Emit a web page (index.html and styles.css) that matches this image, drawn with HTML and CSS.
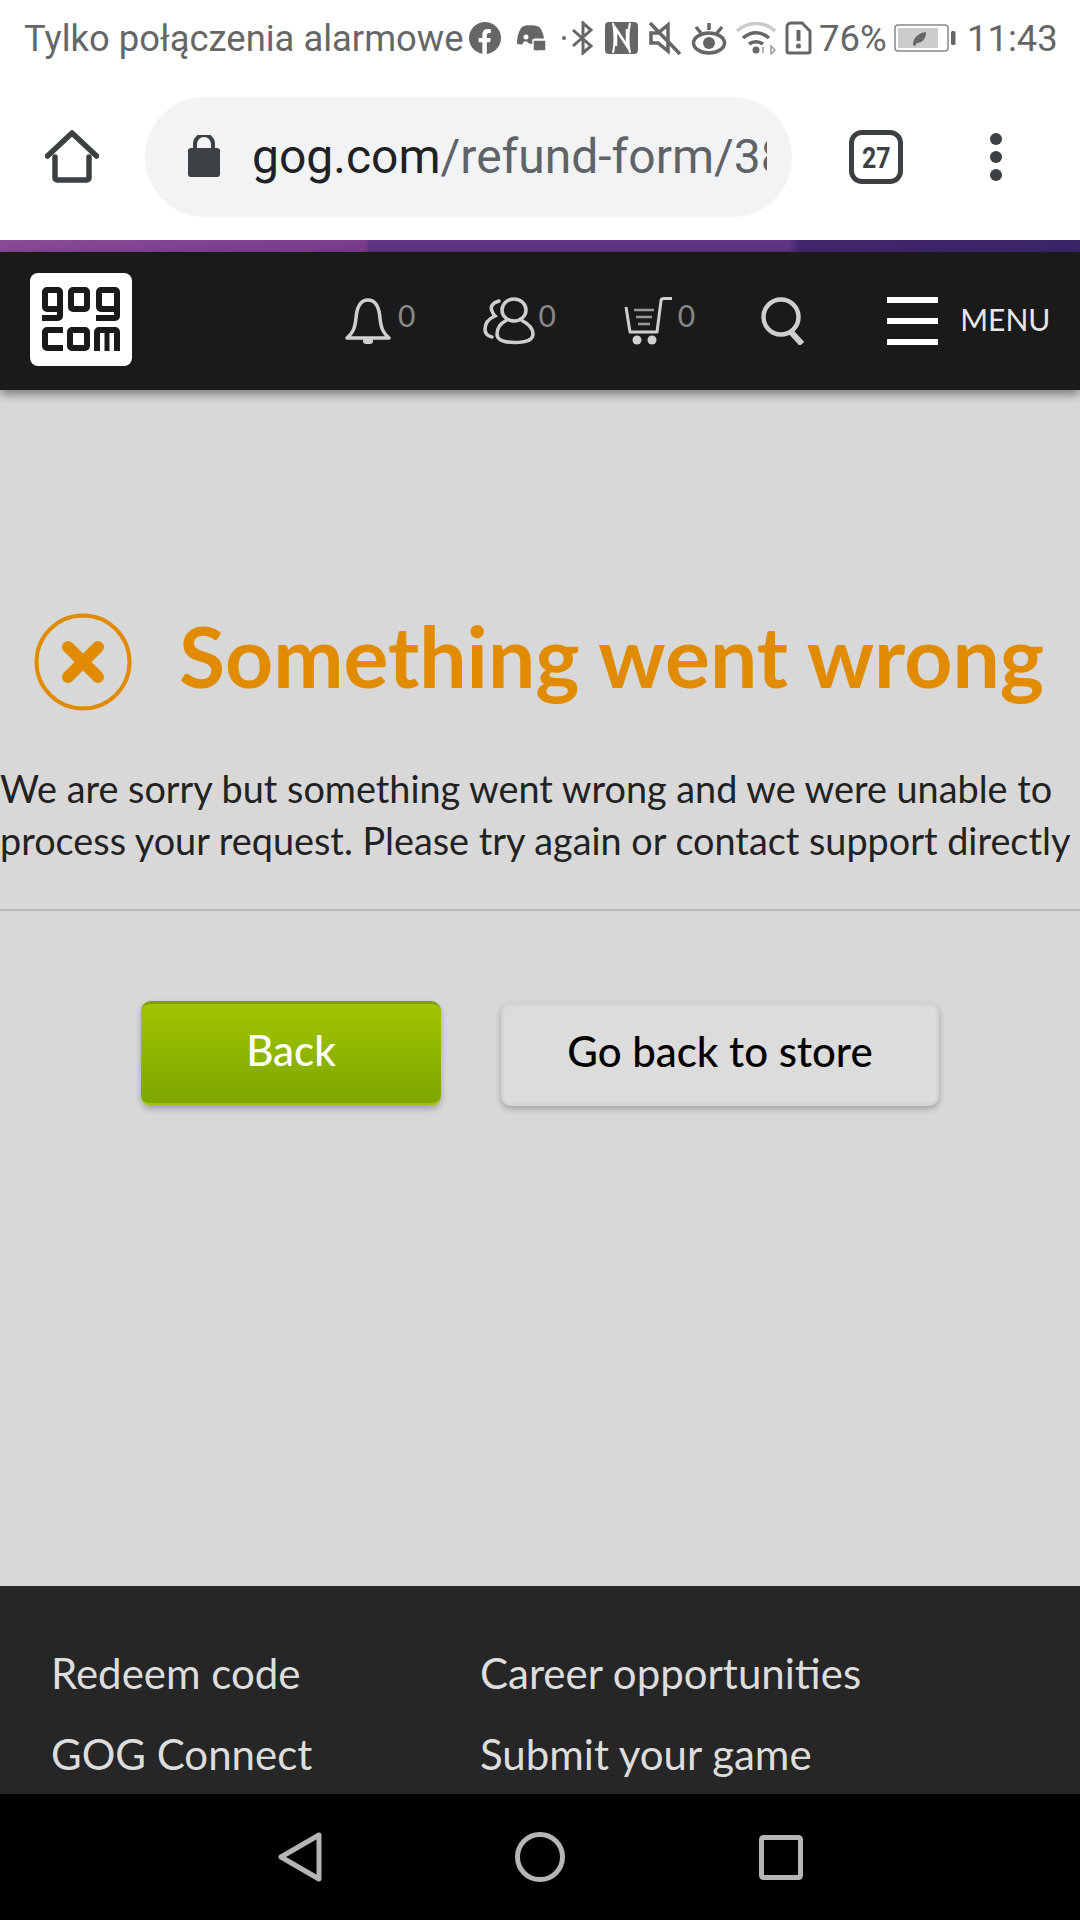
FILE: index.html
```html
<!DOCTYPE html>
<html lang="en">
<head>
<meta charset="utf-8">
<title>GOG.com</title>
<link rel="stylesheet" href="styles.css">
</head>
<body>
<div class="screen">
  <header class="status">
    <span class="status-text">Tylko połączenia alarmowe</span>
    <svg class="si si-fb" width="32" height="32" viewBox="0 0 30 30"><circle cx="15" cy="15" r="15" fill="#666"/><path d="M12.5 30V19H9v-4h3.500v-3c0-3.500 2-5.500 5.200-5.500 1.500 0 2.800.2 2.800.2v3.500h-1.600c-1.700 0-2.200 1-2.200 2.100V15h3.700l-.6 4h-3.100v11z" fill="#fff"/></svg>
    <svg class="si si-dc" width="30" height="30" viewBox="0 0 30 30"><path d="M1 21C1 14 3 7 6 4c3-1.500 6-2 8-1.500 3-.5 7 0 10 2 2 3 3.500 7 4 11H18v6l-5-1-2-2H8l-2 3c-3 0-4-.5-5-.5z" fill="#666"/><circle cx="10" cy="14" r="2.500" fill="#fff"/><path d="M17 17h13v11H22l-2 3v-3h-3z" fill="#666" stroke="#fff" stroke-width="1.500"/></svg>
    <span class="si-dot"></span>
    <svg class="si si-bt" width="24" height="34" viewBox="0 0 24 34"><path d="M2 9l18 16-8 7V2l8 7L2 25" fill="none" stroke="#666" stroke-width="3"/></svg>
    <svg class="si si-nfc" width="33" height="34" viewBox="0 0 33 34"><rect x="0" y="1" width="33" height="32" rx="4" fill="#666"/><path d="M8 2c2 8 2 22 0 30M25 2c-2 8-2 22 0 30" fill="none" stroke="#fff" stroke-width="2"/><path d="M11 25V8l11 17V8" fill="none" stroke="#fff" stroke-width="2.500"/></svg>
    <svg class="si si-mute" width="34" height="34" viewBox="0 0 34 34"><path d="M3 12v10h7l10 8V4l-10 8z" fill="none" stroke="#666" stroke-width="3.500"/><path d="M2 2l30 31" stroke="#666" stroke-width="3.500"/></svg>
    <svg class="si si-eye" width="36" height="34" viewBox="0 0 36 34"><ellipse cx="18" cy="22" rx="15.500" ry="10" fill="none" stroke="#666" stroke-width="3.500"/><circle cx="18" cy="22" r="6" fill="#666"/><path d="M18 2v7M5 6l5 6M31 6l-5 6" stroke="#666" stroke-width="3.500"/></svg>
    <svg class="si si-wifi" width="40" height="34" viewBox="0 0 40 34"><path d="M1 10c11-10 27-10 38 0" fill="none" stroke="#ccc" stroke-width="3.500"/><path d="M7 17c8-7 18-7 26 0M13 23c4-3 10-3 14 0" fill="none" stroke="#666" stroke-width="3.500"/><circle cx="20" cy="29" r="3.500" fill="#666"/><path d="M27 32v-6M35 33v-8l4 4z" fill="none" stroke="#999" stroke-width="1.500"/></svg>
    <svg class="si si-sim" width="27" height="34" viewBox="0 0 27 34"><path d="M2 6a4 4 0 0 1 4-4h11l8 8v20a2 2 0 0 1-2 2H4a2 2 0 0 1-2-2z" fill="none" stroke="#666" stroke-width="3"/><path d="M13.500 9v11" stroke="#666" stroke-width="4"/><circle cx="13.500" cy="25" r="2.500" fill="#666"/></svg>
    <span class="status-pct">76%</span>
    <svg class="si si-batt" width="62" height="30" viewBox="0 0 62 30"><rect x="1" y="2" width="53" height="26" rx="3" fill="none" stroke="#888" stroke-width="1.500"/><rect x="4" y="5" width="40" height="20" fill="#ccc"/><rect x="57" y="8" width="4.500" height="14" rx="1.500" fill="#666"/><path d="M19 22c0-8 6-12 13-13 0 7-4 11-9 11l-2 3z" fill="#666"/></svg>
    <span class="status-time">11:43</span>
  </header>

  <div class="browser">
    <svg class="br-home" width="54" height="54" viewBox="0 0 54 54"><path d="M10 27v21a2 2 0 0 0 2 2h30a2 2 0 0 0 2-2V27M2.500 26L27 3l24.500 23" fill="none" stroke="#3c4043" stroke-width="5.500" stroke-linejoin="round" stroke-linecap="round"/></svg>
    <div class="pill">
      <svg class="lock" width="32" height="42" viewBox="0 0 32 42"><rect x="0" y="13" width="32" height="29" rx="3" fill="#3c4043"/><path d="M7 15V9a9 9 0 0 1 18 0v6" fill="none" stroke="#3c4043" stroke-width="4"/></svg>
      <div class="url"><span class="url-host">gog.com</span><span class="url-path">/refund-form/38</span></div>
    </div>
    <div class="tabs"><span class="tabs-num">27</span></div>
    <div class="dots"><i></i><i></i><i></i></div>
  </div>

  <div class="strip"></div>

  <nav class="gognav">
    <svg class="logo" width="102" height="93" viewBox="0 0 102 93" role="img" aria-label="GOG.com logo">
      <rect width="102" height="93" rx="8" fill="#fff"/>
      <g fill="none" stroke="#1a1a1a" stroke-width="6" stroke-linejoin="round">
        <rect x="15" y="17" width="15" height="19" rx="2"/><path d="M30 19V43a2 2 0 0 1-2 2H12"/>
        <rect x="41" y="17" width="16" height="19" rx="2"/>
        <rect x="69" y="17" width="18" height="19" rx="2"/><path d="M87 19V43a2 2 0 0 1-2 2H66"/>
        <path d="M33 57H17a2 2 0 0 0-2 2V73a2 2 0 0 0 2 2H33"/>
        <rect x="40" y="57" width="17" height="18" rx="2"/>
        <path d="M67 78V59a2 2 0 0 1 2-2H85a2 2 0 0 1 2 2V78"/>
        <path d="M77 57V78" stroke-width="5"/>
      </g>
    </svg>
    <div class="nav-items">
      <div class="nav-item nav-bell">
        <svg width="46" height="48" viewBox="0 0 46 48"><path d="M2 41c6-5 8-10 9-20 1-12 5-18 12-18s11 6 12 18c1 10 3 15 9 20z" fill="none" stroke="#cfcfcf" stroke-width="3.500" stroke-linejoin="round"/><path d="M18 42h10v2a3 3 0 0 1-3 3h-4a3 3 0 0 1-3-3z" fill="#cfcfcf"/></svg>
        <span class="count">0</span>
      </div>
      <div class="nav-item nav-friends">
        <svg width="52" height="48" viewBox="0 0 52 48"><path d="M16 4C9 6 7 10 9 14c1 3 3 5 3 5-7 3-10 8-10 13 0 4 2 7 7 8" fill="none" stroke="#cfcfcf" stroke-width="3.500" stroke-linecap="round"/><ellipse cx="31" cy="13" rx="12" ry="11" fill="none" stroke="#cfcfcf" stroke-width="3.500"/><path d="M24 23C16 27 14 32 14 37c0 6 8 8.500 18 8.500S50 43 50 37c0-5-4-10-12-14" fill="none" stroke="#cfcfcf" stroke-width="3.500"/></svg>
        <span class="count">0</span>
      </div>
      <div class="nav-item nav-cart">
        <svg width="50" height="48" viewBox="0 0 50 48"><path d="M2 10l4 25h27l4-31c0-1.500 1-2.500 3-2.500h8" fill="none" stroke="#cfcfcf" stroke-width="3" stroke-linejoin="round"/><path d="M10 13h20M12 20h16M14 27h12" stroke="#999" stroke-width="2.500"/><circle cx="13" cy="43" r="4.500" fill="#cfcfcf"/><circle cx="28" cy="43" r="4.500" fill="#cfcfcf"/></svg>
        <span class="count">0</span>
      </div>
      <svg class="nav-search" width="46" height="48" viewBox="0 0 46 48"><circle cx="20" cy="20" r="17.500" fill="none" stroke="#cfcfcf" stroke-width="4.500"/><path d="M30 35l11 12" stroke="#cfcfcf" stroke-width="6"/></svg>
      <div class="burger"><i></i><i></i><i></i></div>
      <span class="menu">MENU</span>
    </div>
  </nav>

  <main class="main">
    <div class="headline">
      <svg class="x-icon" width="98" height="98" viewBox="0 0 98 98"><circle cx="49" cy="49" r="46.500" fill="none" stroke="#e08b00" stroke-width="4"/><path d="M34 34l30 30M64 34L34 64" stroke="#e08b00" stroke-width="12" stroke-linecap="round"/></svg>
      <h1 class="title">Something went wrong</h1>
    </div>
    <p class="msg">We are sorry but something went wrong and we were unable to process your request. Please try again or contact support directly</p>
    <hr class="rule">
    <div class="actions">
      <a class="btn btn-green">Back</a>
      <a class="btn btn-grey">Go back to store</a>
    </div>
  </main>

  <footer class="foot">
    <div class="foot-col foot-left"><span>Redeem code</span><span>GOG Connect</span></div>
    <div class="foot-col"><span>Career opportunities</span><span>Submit your game</span></div>
  </footer>

  <div class="sysnav">
    <svg width="46" height="52" viewBox="0 0 46 52"><path d="M42 4L4 26l38 22z" fill="none" stroke="#b5b5b5" stroke-width="5" stroke-linejoin="round"/></svg>
    <svg width="50" height="50" viewBox="0 0 50 50"><circle cx="25" cy="25" r="22.500" fill="none" stroke="#b5b5b5" stroke-width="5"/></svg>
    <svg class="sys-square" width="44" height="45" viewBox="0 0 44 45"><rect x="2.500" y="2.500" width="39" height="40" rx="2" fill="none" stroke="#b5b5b5" stroke-width="5"/></svg>
  </div>
</div>
</body>
</html>
```
FILE: styles.css
```css
* { box-sizing: border-box; }
html, body { margin: 0; padding: 0; }
body { font-family: "Lato", "Noto Sans", sans-serif; background: #d8d8d8; }
.screen { width: 1080px; height: 1920px; overflow: hidden; display: flex; flex-direction: column; }

.status { height: 76px; flex: none; background: #fff; display: flex; align-items: center; padding-left: 24px; font-family: "Roboto", sans-serif; font-size: 36.400px; color: #666; white-space: nowrap; }
.status-text { width: 445px; flex: none; }
.si { flex: none; display: block; }
.si-dc { margin-left: 15px; }
.si-dot { width: 4px; height: 4px; border-radius: 50%; background: #666; margin-left: 16px; }
.si-bt { margin-left: 5px; }
.si-nfc { margin-left: 10px; }
.si-mute { margin-left: 10px; }
.si-eye { margin-left: 9px; }
.si-wifi { margin-left: 9px; }
.si-sim { margin-left: 9px; }
.status-pct { margin-left: 7px; width: 70px; }
.si-batt { margin-left: 5px; }
.status-time { margin-left: 11px; }

.browser { height: 164px; flex: none; background: #fff; display: flex; align-items: center; padding: 0 0 2px 45px; }
.br-home { flex: none; }
.pill { width: 647px; height: 120px; flex: none; margin-left: 46px; border-radius: 60px; background: #f1f3f4; display: flex; align-items: center; padding-left: 43px; }
.lock { flex: none; margin-top: -2px; }
.url { width: 515px; margin-left: 32px; overflow: hidden; white-space: nowrap; font-family: "Roboto", sans-serif; font-size: 48px; line-height: 60px; }
.url-host { color: #202124; }
.url-path { color: #5f6368; }
.tabs { width: 54px; height: 54px; flex: none; margin-left: 57px; border: 5.500px solid #3c4043; border-radius: 13px; display: flex; align-items: center; justify-content: center; font-family: "Roboto", sans-serif; font-weight: 700; font-size: 30px; color: #3c4043; }
.tabs-num { display: block; transform: scaleX(.83); }
.dots { flex: none; margin-left: 87px; display: flex; flex-direction: column; gap: 6px; }
.dots i { width: 12px; height: 12px; border-radius: 50%; background: #3c4043; display: block; }

.strip { height: 12px; flex: none; background: linear-gradient(90deg, #8a4a98 0%, #7e3c8c 33.800%, #5f3585 34.200%, #5f3585 73%, #42276f 74%, #3c2468 100%); }

.gognav { height: 138px; flex: none; background: #1a1a1a; display: flex; align-items: center; padding-left: 30px; position: relative; z-index: 2; box-shadow: 0 4px 10px rgba(0,0,0,.45); }
.logo { flex: none; margin-top: -3px; }
.nav-items { display: flex; align-items: center; margin-left: 213px; }
.nav-item { display: flex; align-items: flex-start; flex: none; }
.count { font-size: 30px; line-height: 36px; color: #888; margin-left: 7px; }
.nav-friends { margin-left: 68px; }
.nav-friends .count { margin-left: 3px; }
.nav-cart { margin-left: 68px; }
.nav-cart .count { margin-left: 4px; }
.nav-search { flex: none; margin-left: 66px; }
.burger { flex: none; margin-left: 80px; display: flex; flex-direction: column; gap: 15px; }
.burger i { width: 51px; height: 6px; background: #fff; display: block; }
.menu { flex: none; margin: -4px 0 0 22px; font-size: 30px; color: #e6e6e6; }

.main { flex: 1; background: #d8d8d8; display: flex; flex-direction: column; }
.headline { display: flex; align-items: center; padding: 223px 0 0 34px; }
.x-icon { flex: none; }
.title { margin: 0 0 12px 47px; font-size: 84px; line-height: 86px; font-weight: 700; color: #e08b00; white-space: nowrap; }
.msg { margin: 52px 0 0; font-size: 37.800px; line-height: 52px; color: #222; width: 1078px; }
.rule { margin: 42px 0 0; border: 0; height: 2px; background: #b8b8b8; }
.actions { display: flex; align-items: flex-end; padding: 90px 0 0 141px; }
.btn { display: flex; align-items: center; justify-content: center; font-size: 42px; font-weight: 500; border-radius: 10px; flex: none; padding-bottom: 8px; }
.btn-green { width: 300px; height: 105px; color: #fff; background: linear-gradient(#a2c400, #7da700); border-top: 3px solid #7f9e12; border-bottom: 3px solid #9fc400; box-shadow: 0 3px 6px rgba(0,0,0,.25); }
.btn-grey { width: 438px; height: 103px; margin-left: 60px; color: #000; background: #dcdcdc; border: 3px solid #d4d4d4; box-shadow: 0 3px 6px rgba(0,0,0,.25); }

.foot { height: 208px; flex: none; background: #262626; display: flex; padding: 64px 0 0 51px; color: #ddd; font-size: 42px; overflow: hidden; }
.foot-col { display: flex; flex-direction: column; gap: 34px; white-space: nowrap; line-height: 47px; }
.foot-left { width: 429px; flex: none; }

.sysnav { height: 126px; flex: none; background: #000; display: flex; align-items: center; padding: 0 0 0 277px; gap: 192px; }
.sysnav svg { flex: none; display: block; }
.sys-square { margin-left: 2px; }
```
